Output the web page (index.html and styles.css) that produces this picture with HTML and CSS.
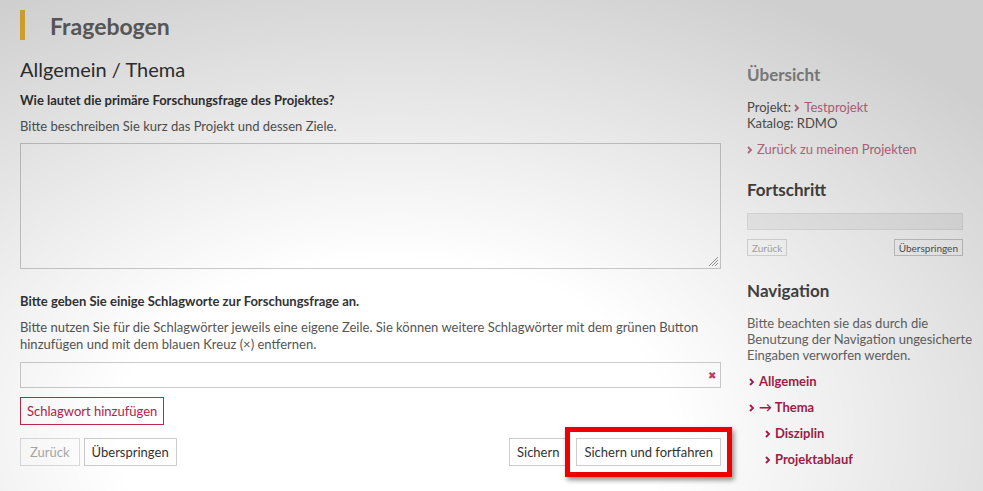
FILE: index.html
```html
<!DOCTYPE html>
<html lang="de">
<head>
    <meta charset="UTF-8">
    <title>Fragebogen</title>
    <link rel="stylesheet" href="styles.css">
</head>
<body>
    <div class="page">
        <div class="main">
            <h1 class="page-title">Fragebogen</h1>
            <h2 class="section-title">Allgemein / Thema</h2>

            <!-- Frage 1 -->
            <div class="question">
                <label class="q-label">Wie lautet die primäre Forschungsfrage des Projektes?</label>
                <p class="q-help">Bitte beschreiben Sie kurz das Projekt und dessen Ziele.</p>
                <div class="textarea">
                    <svg class="grip" width="11" height="11" viewBox="0 0 11 11">
                        <path d="M10 1 L1 10 M10 4 L4 10 M10 7 L7 10" stroke="#999" stroke-width="1"/>
                    </svg>
                </div>
            </div>

            <!-- Frage 2 -->
            <div class="question q2">
                <label class="q-label">Bitte geben Sie einige Schlagworte zur Forschungsfrage an.</label>
                <p class="q-help">Bitte nutzen Sie für die Schlagwörter jeweils eine eigene Zeile. Sie können weitere Schlagwörter mit dem grünen Button hinzufügen und mit dem blauen Kreuz (×) entfernen.</p>
                <div class="input-row">
                    <span class="remove">✖</span>
                </div>
                <button class="btn btn-add">Schlagwort hinzufügen</button>
            </div>

            <div class="actions">
                <div class="actions-left">
                    <button class="btn btn-disabled">Zurück</button>
                    <button class="btn">Überspringen</button>
                </div>
                <div class="actions-right">
                    <button class="btn">Sichern</button>
                    <span class="highlight">
                        <button class="btn">Sichern und fortfahren</button>
                    </span>
                </div>
            </div>
        </div>

        <div class="sidebar">
            <h3 class="side-title light">Übersicht</h3>
            <div class="meta">
                <div>Projekt: <a class="link-soft"><svg class="chev" width="6" height="8" viewBox="0 0 6 8"><path d="M1 1 L4 4 L1 7" fill="none" stroke="currentColor" stroke-width="1.8"/></svg>Testprojekt</a></div>
                <div>Katalog: RDMO</div>
            </div>
            <a class="link-soft back"><svg class="chev" width="6" height="8" viewBox="0 0 6 8"><path d="M1 1 L4 4 L1 7" fill="none" stroke="currentColor" stroke-width="1.8"/></svg>Zurück zu meinen Projekten</a>

            <h3 class="side-title">Fortschritt</h3>
            <div class="progress"></div>
            <div class="side-buttons">
                <button class="btn-sm btn-sm-disabled">Zurück</button>
                <button class="btn-sm">Überspringen</button>
            </div>

            <h3 class="side-title">Navigation</h3>
            <p class="side-text">Bitte beachten sie das durch die Benutzung der Navigation ungesicherte Eingaben verworfen werden.</p>
            <ul class="nav">
                <li><svg class="chev" width="6" height="8" viewBox="0 0 6 8"><path d="M1 1 L4 4 L1 7" fill="none" stroke="currentColor" stroke-width="1.8"/></svg>Allgemein</li>
                <li><svg class="chev" width="6" height="8" viewBox="0 0 6 8"><path d="M1 1 L4 4 L1 7" fill="none" stroke="currentColor" stroke-width="1.8"/></svg>→ Thema</li>
                <li class="sub"><svg class="chev" width="6" height="8" viewBox="0 0 6 8"><path d="M1 1 L4 4 L1 7" fill="none" stroke="currentColor" stroke-width="1.8"/></svg>Disziplin</li>
                <li class="sub"><svg class="chev" width="6" height="8" viewBox="0 0 6 8"><path d="M1 1 L4 4 L1 7" fill="none" stroke="currentColor" stroke-width="1.8"/></svg>Projektablauf</li>
            </ul>
        </div>
    </div>
</body>
</html>
```

FILE: styles.css
```css
body {
    margin: 0;
    font-family: Lato, "Liberation Sans", sans-serif;
    font-size: 13px;
    color: #444;
    background-color: #fff;
}
/* dimming vignette laid over the whole screenshot */
body::after {
    content: "";
    position: fixed;
    top: 0;
    left: 0;
    right: 0;
    bottom: 0;
    pointer-events: none;
    background: radial-gradient(ellipse 80% 100% at 40% 88%, rgba(0, 0, 0, 0) 35%, rgba(0, 0, 0, 0.19) 100%);
    z-index: 1;
}
.page {
    display: flex;
    gap: 26px;
    padding: 10px 20px 24px 20px;
}
.main {
    width: 701px;
}
.sidebar {
    width: 216px;
}
.page-title {
    margin: 0;
    border-left: 5px solid #f5c035;
    padding-left: 25px;
    height: 30px;
    line-height: 32px;
    font-size: 23px;
    font-weight: bold;
    color: #666;
}
.section-title {
    margin: 17px 0 0 0;
    font-size: 20px;
    font-weight: normal;
    color: #333;
    line-height: 24px;
}
.question {
    margin-top: 10px;
}
.q-label {
    display: block;
    font-weight: bold;
    color: #333;
    line-height: 18px;
}
.q-help {
    margin: 9px 0 0 0;
    line-height: 17px;
    color: #555;
}
.textarea {
    position: relative;
    margin-top: 8px;
    height: 124px;
    border: 1px solid #ccc;
    background-color: #fff;
}
.grip {
    position: absolute;
    right: 1px;
    bottom: 1px;
}
.q2 {
    margin-top: 23px;
}
.input-row {
    margin-top: 9px;
    height: 24px;
    border: 1px solid #ccc;
    background-color: #fff;
    display: flex;
    justify-content: flex-end;
    align-items: center;
    padding-right: 4px;
}
.remove {
    color: #c0405f;
    font-size: 10px;
}
.btn {
    font-family: Lato, "Liberation Sans", sans-serif;
    font-size: 13px;
    color: #333;
    background-color: #fff;
    border: 1px solid #ccc;
    height: 28px;
    padding: 0 7px;
    cursor: pointer;
}
.btn-add {
    margin-top: 9px;
    border-color: #c0284f;
    color: #b5224a;
    padding: 0 6px;
}
.btn-disabled {
    color: #aaa;
    border-color: #ddd;
    padding: 0 9px;
}
.actions {
    display: flex;
    justify-content: space-between;
    margin-top: 13px;
}
.actions-left {
    display: flex;
    gap: 4px;
}
.actions-right {
    display: flex;
    gap: 9px;
}
.highlight {
    position: relative;
    display: inline-block;
    z-index: 2;
}
.highlight::before {
    content: "";
    position: absolute;
    top: -11px;
    left: -11px;
    right: -11px;
    bottom: -11px;
    border: 5px solid #ee0000;
    box-shadow: 2px 3px 5px rgba(0, 0, 0, 0.45);
}
.side-title {
    margin: 0;
    font-size: 17px;
    font-weight: bold;
    color: #444;
    line-height: 20px;
}
.side-title.light {
    color: #8c8c8c;
    margin-top: 55px;
}
.meta {
    margin-top: 14px;
    line-height: 16px;
    color: #555;
}
.link-soft {
    color: #c46d88;
}
.chev {
    margin-right: 4px;
    vertical-align: 0;
}
.back {
    display: block;
    margin-top: 10px;
    line-height: 16px;
}
.back + .side-title {
    margin-top: 23px;
}
.progress {
    margin-top: 13px;
    height: 17px;
    background-color: #f2f2f2;
    border: 1px solid #e4e4e4;
    box-sizing: border-box;
}
.side-buttons {
    display: flex;
    justify-content: space-between;
    margin-top: 9px;
}
.btn-sm {
    font-family: Lato, "Liberation Sans", sans-serif;
    font-size: 10px;
    color: #555;
    background-color: #fff;
    border: 1px solid #ccc;
    height: 17px;
    padding: 0 4px;
}
.btn-sm-disabled {
    color: #aaa;
    border-color: #ddd;
}
.side-buttons + .side-title {
    margin-top: 25px;
}
.side-text {
    margin: 14px -10px 0 0;
    line-height: 16px;
    color: #666;
}
.nav {
    list-style-type: none;
    margin: 5px 0 0 0;
    padding: 0;
    color: #a51d48;
    font-weight: bold;
}
.nav li {
    line-height: 26px;
    padding-left: 2px;
}
.nav li.sub {
    padding-left: 18px;
}
```
